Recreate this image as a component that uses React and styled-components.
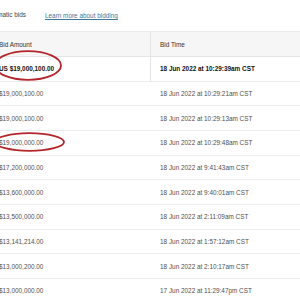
import React from "react";
import styled, { createGlobalStyle } from "styled-components";

const Global = createGlobalStyle`
  html, body { margin: 0; padding: 0; background: #ffffff; overflow: hidden; }
  body { font-family: "Liberation Sans", Arial, sans-serif; }
`;

const Page = styled.div`
  position: relative;
  margin-left: -10px;
  width: 330px;
  font-size: 6.4px;
  color: #555;
`;

const Toolbar = styled.div`
  height: 31px;
  display: flex;
  align-items: center;
  margin-left: -37px;
  gap: 4px;
`;

const Check = styled.span`
  width: 8px;
  height: 8px;
  border: 1px solid #888;
  border-radius: 1px;
  flex: none;
`;

const Label = styled.span`
  color: #444;
  margin-right: 15px;
  margin-top: -3px;
`;

const LearnLink = styled.a`
  color: #3f7897;
  text-decoration: underline;
  text-underline-offset: 1px;
`;

const Table = styled.div`
  display: grid;
  grid-template-columns: 161px 1fr;
  border-top: 1px solid #ececec;
`;

const HeadCell = styled.div`
  height: 24px;
  background: #f6f6f6;
  border-bottom: 1px solid #e6e6e6;
  display: flex;
  align-items: center;
  padding-left: 9px;
  color: #333;
  border-left: ${(p) => (p.$divider ? "1px solid #e4e4e4" : "none")};
  margin-left: ${(p) => (p.$divider ? "-1px" : "0")};
`;

const Cell = styled.div`
  height: 23.67px;
  border-bottom: 1px solid #ececec;
  display: flex;
  align-items: center;
  padding-left: 9px;
  color: ${(p) => (p.$strong ? "#111" : "#4f4f4f")};
  font-weight: ${(p) => (p.$strong ? 700 : 400)};
  white-space: nowrap;
  border-left: ${(p) => (p.$divider ? "1px solid #e4e4e4" : "none")};
  margin-left: ${(p) => (p.$divider ? "-1px" : "0")};
`;

const Marks = styled.svg`
  position: absolute;
  left: 0;
  top: 0;
  pointer-events: none;
`;

const bids = [
  ["US $19,000,100.00", "18 Jun 2022 at 10:29:39am CST", true],
  ["$19,000,100.00", "18 Jun 2022 at 10:29:21am CST"],
  ["$19,000,100.00", "18 Jun 2022 at 10:29:13am CST"],
  ["$19,000,000.00", "18 Jun 2022 at 10:29:48am CST"],
  ["$17,200,000.00", "18 Jun 2022 at 9:41:43am CST"],
  ["$13,600,000.00", "18 Jun 2022 at 9:40:01am CST"],
  ["$13,500,000.00", "18 Jun 2022 at 2:11:09am CST"],
  ["$13,141,214.00", "18 Jun 2022 at 1:57:12am CST"],
  ["$13,000,200.00", "18 Jun 2022 at 2:10:17am CST"],
  ["$13,000,000.00", "17 Jun 2022 at 11:29:47pm CST"],
];

export default function App() {
  return (
    <>
      <Global />
      <Page>
        <Toolbar>
          <Check />
          <Label>Show automatic bids</Label>
          <LearnLink href="#">Learn more about bidding</LearnLink>
        </Toolbar>
        <Table>
          <HeadCell>Bid Amount</HeadCell>
          <HeadCell $divider>Bid Time</HeadCell>
          {bids.map(([amt, time, strong], i) => (
            <React.Fragment key={i}>
              <Cell $strong={strong}>{amt}</Cell>
              <Cell $strong={strong} $divider={i === 0}>
                {time}
              </Cell>
            </React.Fragment>
          ))}
        </Table>
        <Marks width="330" height="300" viewBox="0 0 330 300">
          <ellipse cx="38" cy="65.5" rx="33" ry="14.3" fill="none" stroke="#b3262b" strokeWidth="1.8" />
          <ellipse cx="39.5" cy="142" rx="34.5" ry="8.8" fill="none" stroke="#b3262b" strokeWidth="1.8" />
        </Marks>
      </Page>
    </>
  );
}
